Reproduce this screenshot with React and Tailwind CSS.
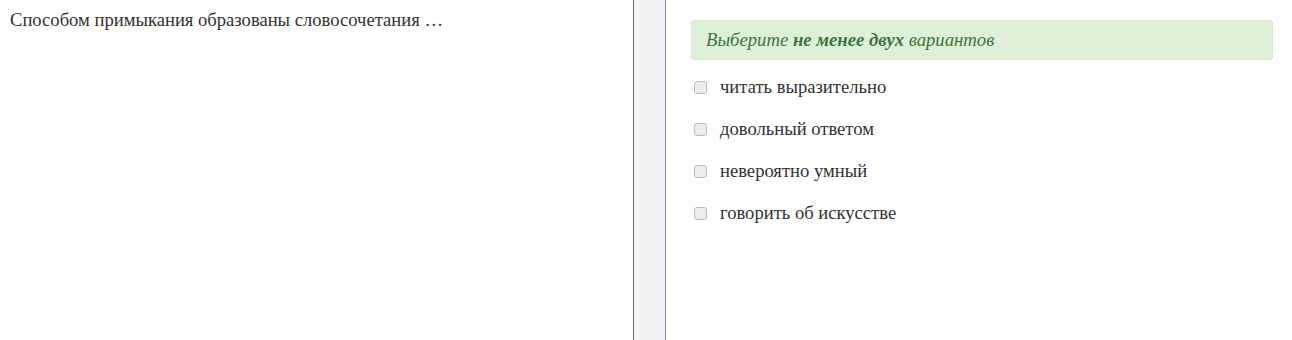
export default function App() {
  const options = ["читать выразительно", "довольный ответом", "невероятно умный", "говорить об искусстве"];
  return (
    <div className="flex h-[340px] w-[1292px] bg-white text-[#333] overflow-hidden" style={{ fontFamily: '"Liberation Serif", "Times New Roman", serif' }}>
      <div className="w-[633px] shrink-0 pl-[10px] pt-[8px] text-[18.6px] leading-[24px]">
        Способом примыкания образованы словосочетания …
      </div>
      <div className="w-[33px] shrink-0 border-l border-r border-l-[#5f6c92] border-r-[#7b89b0] bg-[#f2f2f2]" />
      <div className="flex-1 pl-[25px] pr-[19px] pt-[20px]">
        <div className="h-[40px] flex items-center rounded-[3px] border border-[#d6e9c6] bg-[#dff0d8] pl-[14px] text-[18.7px] italic text-[#3c763d]">
          Выберите&nbsp;<b>не менее двух</b>&nbsp;вариантов
        </div>
        <div className="mt-[15px] flex flex-col gap-[18px]">
          {options.map((o) => (
            <label key={o} className="flex items-center h-[24px] text-[18.6px]">
              <span className="ml-[3px] w-[13px] h-[13px] rounded-[3px] border border-[#bcbcbc] bg-[#ededed]" />
              <span className="ml-[13px]">{o}</span>
            </label>
          ))}
        </div>
      </div>
    </div>
  );
}
